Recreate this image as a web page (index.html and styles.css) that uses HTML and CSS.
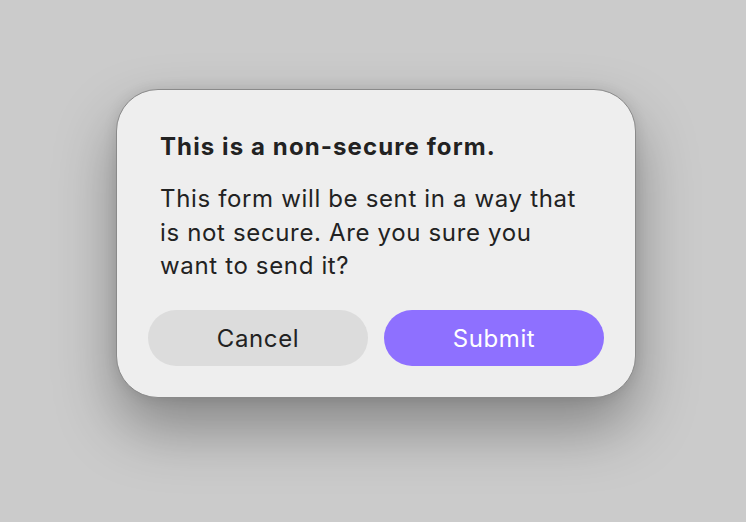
FILE: index.html
```html
<!DOCTYPE html>
<html>
<head>
<meta charset="utf-8">
<link rel="stylesheet" href="styles.css">
</head>
<body>
<div class="stage">
  <div class="dialog">
    <h1 class="title">This is a non-secure form.</h1>
    <p class="message">This form will be sent in a way that is not secure. Are you sure you want to send it?</p>
    <div class="actions">
      <button class="btn btn-cancel">Cancel</button>
      <button class="btn btn-submit">Submit</button>
    </div>
  </div>
</div>
</body>
</html>
```
FILE: styles.css
```css
html, body {
  margin: 0;
  padding: 0;
  height: 100%;
  background: #cbcbcb;
  font-family: "Inter", "Noto Sans", sans-serif;
}
.stage {
  padding: 89px 0 0 116px;
}
.dialog {
  box-sizing: border-box;
  width: 520px;
  height: 309px;
  background: #eeeeee;
  border: 1px solid #8a8a8a;
  border-radius: 42px;
  box-shadow: 0 30px 60px rgba(0,0,0,0.34), 0 0 14px rgba(0,0,0,0.1);
  padding: 42px 31px 31px 31px;
  display: flex;
  flex-direction: column;
}
.title {
  margin: 0 0 0 12px;
  font-size: 24px;
  font-weight: 700;
  line-height: 30px;
  letter-spacing: 1.1px;
  color: #222;
}
.message {
  margin: 20px 24px 0 12px;
  font-size: 24px;
  line-height: 33.5px;
  letter-spacing: 0.65px;
  color: #222;
}
.actions {
  margin-top: auto;
  display: flex;
  gap: 16px;
}
.btn {
  flex: 1;
  height: 56px;
  border: none;
  border-radius: 28px;
  font-family: inherit;
  font-size: 24px;
  letter-spacing: 0.6px;
  padding: 0;
}
.btn-cancel {
  background: #dcdcdc;
  color: #222;
}
.btn-submit {
  background: #8e70ff;
  color: #fff;
}
```
